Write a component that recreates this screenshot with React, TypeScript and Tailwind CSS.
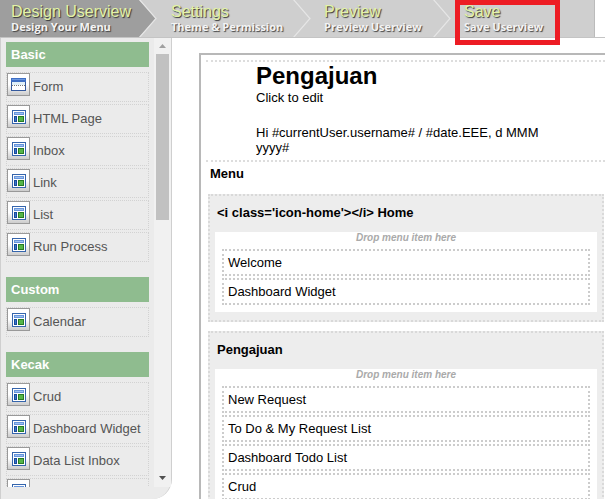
import React from "react";

const steps = [
  { title: "Design Userview", sub: "Design Your Menu", width: "w-[157px] pl-[11px]" },
  { title: "Settings", sub: "Theme & Permission", width: "w-[154px] pl-[14px]" },
  { title: "Preview", sub: "Preview Userview", width: "w-[140px] pl-[13px]" },
  { title: "Save", sub: "Save Userview", width: "w-36 pl-[13px] border-r border-[#bbb]" },
];

const palette = [
  { name: "Basic", items: ["Form", "HTML Page", "Inbox", "Link", "List", "Run Process"] },
  { name: "Custom", items: ["Calendar"] },
  { name: "Kecak", items: ["Crud", "Dashboard Widget", "Data List Inbox", ""] },
];

const categories = [
  { name: "<i class='icon-home'></i> Home", items: ["Welcome", "Dashboard Widget"] },
  {
    name: "Pengajuan",
    items: ["New Request", "To Do & My Request List", "Dashboard Todo List", "Crud"],
  },
];

function FormIcon() {
  return (
    <svg width="15" height="13" viewBox="0 0 15 13" shapeRendering="crispEdges" aria-hidden="true">
      <rect width="15" height="13" fill="#34599d" />
      <rect width="15" height="4" fill="#3f6fc4" />
      <rect x="1" y="1" width="13" height="1" fill="#6b98e0" />
      <rect x="1" y="4" width="13" height="8" fill="#fff" />
      <rect x="1" y="4" width="13" height="3" fill="#e1f0f7" />
      <path d="M1 7.5h13" stroke="#777" strokeDasharray="1 1" />
    </svg>
  );
}

function WidgetIcon() {
  return (
    <svg width="14" height="14" viewBox="0 0 14 14" shapeRendering="crispEdges" aria-hidden="true">
      <rect width="14" height="14" fill="#3565ac" />
      <rect x="1" y="1" width="12" height="12" fill="#fff" />
      <rect x="2" y="2" width="10" height="3" fill="#6795dc" />
      <rect x="3" y="3" width="8" height="1" fill="#9dc0f0" />
      <rect x="2" y="6" width="3" height="6" fill="#174a9c" />
      <rect x="3" y="7" width="1" height="4" fill="#3b75c8" />
      <rect x="6" y="6" width="6" height="6" fill="#257b25" />
      <rect x="7" y="7" width="4" height="4" fill="#55b548" />
    </svg>
  );
}

function StepArrow({ active }: { active: boolean }) {
  return (
    <svg
      width="18"
      height="37"
      viewBox="0 0 18 37"
      className="absolute top-0 right-0"
      aria-hidden="true"
    >
      {active && <path d="M0 0L17 18.500L0 37H18V0Z" fill="#cfcfcf" />}
      <path d="M0 -1L17 18.500L0 38" fill="none" stroke="#e6e6e6" strokeWidth="1.200" />
    </svg>
  );
}

export default function App() {
  return (
    <div className="flex h-screen flex-col overflow-hidden bg-white font-['Liberation_Sans',Arial,sans-serif] text-[13px] leading-[15px] text-black">
      <nav className="relative flex h-[38px] shrink-0 border-b border-[#c4c4c4]">
        {steps.map((step, i) => (
          <button
            key={step.title}
            type="button"
            className={`relative shrink-0 text-left ${step.width} ${i === 0 ? "bg-[#9e9e9e]" : "bg-[#cfcfcf]"}`}
          >
            <span className="block pt-[3px] text-base leading-[18px] text-[#e3f3a6] [text-shadow:1px_1px_1px_#333]">
              {step.title}
            </span>
            <span className="block pb-1 font-['Open_Sans','Noto_Sans',sans-serif] text-[11px] leading-3 font-bold text-[#f4f4f4] [text-shadow:1px_1px_1px_#444]">
              {step.sub}
            </span>
            {i < 3 && <StepArrow active={i === 0} />}
          </button>
        ))}
        <div className="pointer-events-none absolute top-0 left-[455px] h-[45px] w-[105px] border-5 border-[#ed1c24]" />
      </nav>

      <div className="flex min-h-0 flex-1">
        <aside className="flex w-[172px] shrink-0 flex-col rounded-br-[20px] border-x border-[#cfcfcf] bg-[#ebebeb] pb-3">
          <div className="flex min-h-0 flex-1">
            <div className="min-w-0 flex-1 overflow-hidden pt-1 pr-[5px] pl-[5px]">
              {palette.map((group) => (
                <section key={group.name} className="mb-[15px]">
                  <h2 className="mb-[5px] bg-[#8fbc8f] px-[5px] py-[5px] font-bold text-white">
                    {group.name}
                  </h2>
                  <ul className="flex flex-col gap-0.5">
                    {group.items.map((item) => (
                      <li
                        key={item}
                        className="flex h-[30px] gap-[3px] border border-dotted border-[#d2d2d2] whitespace-nowrap text-[#555]"
                      >
                        <span className="flex size-[23px] shrink-0 items-center justify-center border border-[#999] bg-linear-to-b from-white from-50% to-[#ccc]">
                          {item === "Form" ? <FormIcon /> : <WidgetIcon />}
                        </span>
                        <span className="pt-1.5">{item}</span>
                      </li>
                    ))}
                  </ul>
                </section>
              ))}
            </div>
            <div className="flex w-[17px] shrink-0 flex-col items-center bg-[#f1f1f1]">
              <svg width="17" height="16" viewBox="0 0 17 16" aria-hidden="true">
                <path d="M5 10L8.500 6L12 10Z" fill="#a0a0a0" />
              </svg>
              <div className="h-[166px] w-[13px] bg-[#c1c1c1]" />
              <svg width="17" height="17" viewBox="0 0 17 17" className="mt-auto" aria-hidden="true">
                <path d="M5 6L8.500 10L12 6Z" fill="#505050" />
              </svg>
            </div>
          </div>
        </aside>

        <main className="mt-[15px] ml-[27px] min-w-0 flex-1 overflow-hidden border-t-2 border-l-2 border-[#b8b8b8] pt-[5px] pl-[5px]">
          <header className="h-[102px] border-y-2 border-dotted border-[#ddd] pl-[50px]">
            <h1 className="text-2xl leading-7 font-bold">Pengajuan</h1>
            <p>Click to edit</p>
            <p className="mt-5 max-w-[300px]">Hi #currentUser.username# / #date.EEE, d MMM yyyy#</p>
          </header>
          <div className="pr-px pl-0.5">
            <h2 className="px-0.5 pt-1 pb-[13px] font-bold">Menu</h2>
            {categories.map((category) => (
              <section
                key={category.name}
                className="mb-[9px] border-2 border-dotted border-[#d9d9d9] bg-[#ededed] px-[5px] pb-2"
              >
                <h3 className="px-0.5 pt-[9px] pb-3 font-bold">{category.name}</h3>
                <div className="bg-white px-[7px] pb-[7px]">
                  <p className="pb-[5px] text-center text-[10px] leading-3 font-bold text-[#aaa] italic">
                    Drop menu item here
                  </p>
                  <ul className="flex flex-col gap-0.5">
                    {category.items.map((item) => (
                      <li key={item} className="border-2 border-dotted border-[#ccc] px-1 py-1">
                        {item}
                      </li>
                    ))}
                  </ul>
                </div>
              </section>
            ))}
          </div>
        </main>
      </div>
    </div>
  );
}
